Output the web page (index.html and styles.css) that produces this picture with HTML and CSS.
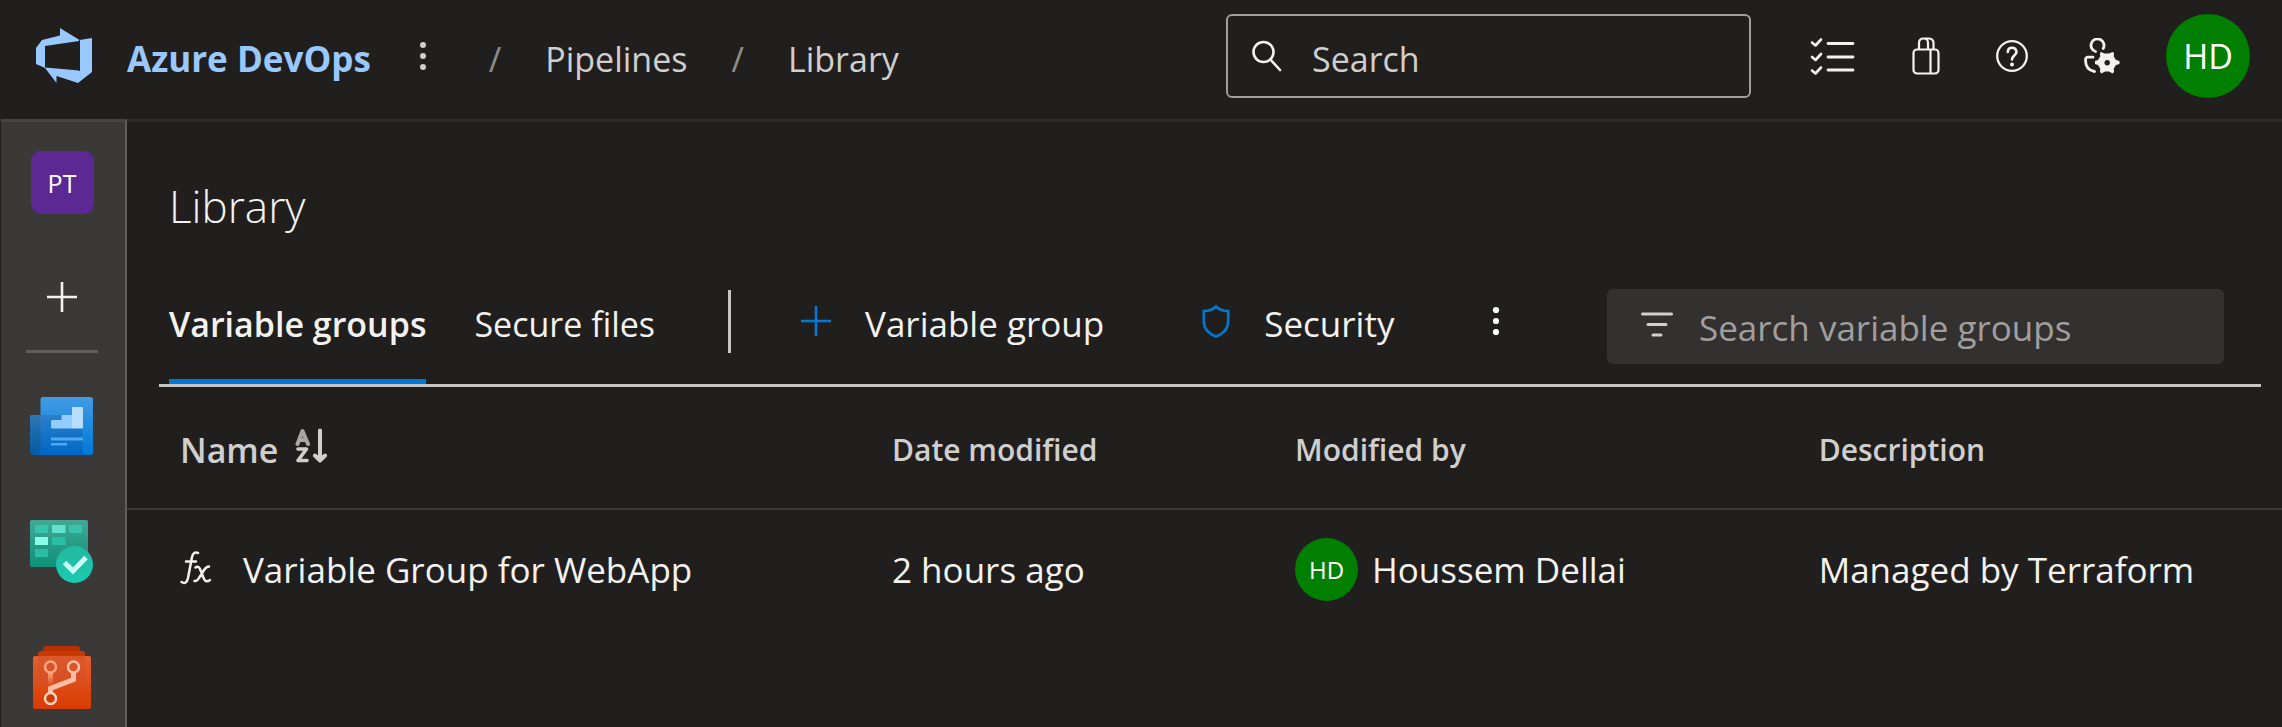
FILE: index.html
```html
<!DOCTYPE html>
<html lang="en">
<head>
<meta charset="utf-8">
<meta name="viewport" content="width=device-width, initial-scale=1">
<title>Library - Azure DevOps</title>
<link rel="stylesheet" href="styles.css">
</head>
<body>
<div class="app">
  <header class="topbar">
    <a class="brand" href="#">
      <svg class="brand-logo" width="56" height="56" viewBox="0 0 56 56" aria-hidden="true">
        <path fill="#99c8ff" fill-rule="evenodd" d="M24 0L43.500 12L56 10V44L42 55L20.500 48V55L9 40L0 36V20L6 12L24 7.500ZM9 18V39.500L43 42.500V13Z"/>
        <path stroke="#211f1e" stroke-width="1" d="M43.500 12V43"/>
      </svg>
      <span class="brand-name">Azure DevOps</span>
    </a>
    <button class="icon-button brand-more" type="button" aria-label="More">
      <svg width="8" height="30" viewBox="0 0 8 30" fill="#d0cfce"><circle cx="4" cy="4" r="3"/><circle cx="4" cy="15" r="3"/><circle cx="4" cy="26" r="3"/></svg>
    </button>
    <nav class="crumbs" aria-label="Breadcrumb">
      <span class="slash">/</span>
      <a href="#">Pipelines</a>
      <span class="slash">/</span>
      <a href="#">Library</a>
    </nav>
    <label class="global-search">
      <svg width="30" height="32" viewBox="0 0 30 32" fill="none" stroke="#f3f2f1" stroke-width="2.600" stroke-linecap="round" aria-hidden="true"><circle cx="11.500" cy="12" r="10"/><path d="M18.500 19.500L28 30"/></svg>
      <input type="search" placeholder="Search" aria-label="Search">
    </label>
    <div class="top-actions">
      <button class="icon-button" type="button" aria-label="Work items">
        <svg width="46" height="40" viewBox="0 0 46 40" fill="none" stroke="#f3f2f1" stroke-width="2.800" stroke-linecap="round" stroke-linejoin="round"><path d="M18 7.500H43M18 21H43M18 34H43"/><path stroke-width="2.600" d="M2 6.500L5.500 9.500L11 3.500M2 21L5.500 24L11 18M2 34.500L5.500 37.500L11 31.500"/></svg>
      </button>
      <button class="icon-button" type="button" aria-label="Marketplace">
        <svg width="28" height="38" viewBox="0 0 28 38" fill="none" stroke="#f3f2f1" stroke-width="2.200"><rect x="1.500" y="12.500" width="25" height="24" rx="3.500"/><path d="M18.500 12.500V36.500"/><path d="M7 12.500V6Q7 1.500 11.500 1.500T16 6V12.500M12.500 1.500H17Q21.500 2 21.500 6V12.500"/></svg>
      </button>
      <button class="icon-button" type="button" aria-label="Help">
        <svg width="32" height="32" viewBox="0 0 32 32" fill="none" stroke="#f3f2f1" stroke-width="2.300" stroke-linecap="round"><circle cx="16" cy="16" r="14.800"/><path stroke-width="2.600" d="M11.800 12Q12 7.800 16 7.800T20.500 12C20.500 15 16 15.600 16 19.500"/><circle cx="16" cy="24.500" r="2" fill="#f3f2f1" stroke="none"/></svg>
      </button>
      <button class="icon-button" type="button" aria-label="User settings">
        <svg width="36" height="36" viewBox="0 0 36 36" fill="none" stroke="#f3f2f1" stroke-width="2.800" stroke-linecap="round"><path d="M11.500 13.500A6.500 6.500 0 1 1 19.200 10.500"/><path d="M9 19.200H4Q1.500 19.200 1.500 22C1.500 28.500 5 32.500 10.500 33.500"/><path fill="#f3f2f1" stroke="none" fill-rule="evenodd" d="M17 14L20.500 15.500H25L28.500 14L30 15L29.800 18.500L32 22L35.500 23V26L32 27L29.800 30.500L30 34L28.500 35.500L25 33.500H21L17.500 35.500L16 34L16.200 30.500L14 27L11 26V23L14 22L16.200 18.500L16 15ZM23.200 22A2.700 2.700 0 1 0 23.200 27.400A2.700 2.700 0 1 0 23.200 22Z"/></svg>
      </button>
      <button class="avatar avatar-large" type="button">HD</button>
    </div>
  </header>

  <div class="body">
    <nav class="rail" aria-label="Project">
      <a class="project-tile" href="#">PT</a>
      <button class="icon-button rail-add" type="button" aria-label="Add">
        <svg width="30" height="30" viewBox="0 0 30 30" stroke="#f3f2f1" stroke-width="2.600"><path d="M0 15H30M15 0V30"/></svg>
      </button>
      <hr class="rail-rule">
      <a class="rail-link" href="#" aria-label="Overview">
        <svg width="64" height="64" viewBox="0 0 64 64">
          <defs>
            <linearGradient id="ov1" x1="0" y1="0" x2="0" y2="1"><stop offset="0" stop-color="#429be5"/><stop offset="1" stop-color="#0078d8"/></linearGradient>
            <linearGradient id="ov2" x1="0" y1="0" x2="0" y2="1"><stop offset="0" stop-color="#2a7fc9"/><stop offset="1" stop-color="#0067c6"/></linearGradient>
            <linearGradient id="ov3" x1="0" y1="0" x2="0" y2="1"><stop offset="0" stop-color="#3076b3"/><stop offset="1" stop-color="#005ba1"/></linearGradient>
          </defs>
          <rect x="10.500" y="3" width="52.500" height="58" rx="2.500" fill="url(#ov1)"/>
          <path fill="url(#ov2)" d="M2 21H52.500V54Q52.500 61 58 61H5Q0 61 0 56V23Q0 21 2 21Z"/>
          <path fill="url(#ov3)" d="M2 21H10.500V55Q10 60 5 61Q0 60 0 55V23Q0 21 2 21Z"/>
          <path fill="#92ccff" d="M22 26H31.500V21H42V34.500H22Q21 34.500 21 33V27Z"/>
          <rect x="42" y="13" width="11" height="21.500" rx="1" fill="#b7deff"/>
          <path fill="#50a8f0" d="M21 43.500H53V46.500H21ZM21 49H37V51.500H21Z"/>
        </svg>
      </a>
      <a class="rail-link" href="#" aria-label="Boards">
        <svg width="64" height="64" viewBox="0 0 64 64">
          <defs>
            <linearGradient id="bd1" x1="0" y1="0" x2="0" y2="1"><stop offset="0" stop-color="#42a896"/><stop offset="1" stop-color="#0f907a"/></linearGradient>
            <linearGradient id="bd2" x1="0" y1="0" x2="0" y2="1"><stop offset="0" stop-color="#23b8a0"/><stop offset="1" stop-color="#19cbb0"/></linearGradient>
          </defs>
          <rect x="0" y="0" width="58" height="47" rx="2" fill="url(#bd1)"/>
          <path fill="#37c4ac" d="M5 5H18V13H5ZM39 5H52V13H39Z"/>
          <path fill="#61e2cd" d="M22 5H35.500V13H22Z"/>
          <path fill="#8affe9" d="M5 17H18V25H5Z"/>
          <path fill="#29bfa5" d="M22 17H35.500V25H22ZM5 29H18V37H5Z"/>
          <circle cx="44.500" cy="44.500" r="18.500" fill="url(#bd2)"/>
          <path fill="none" stroke="#cbfff5" stroke-width="5" d="M34.500 42.500L43 51L56 37.500"/>
        </svg>
      </a>
      <a class="rail-link" href="#" aria-label="Repos">
        <svg width="64" height="64" viewBox="0 0 64 64">
          <defs>
            <linearGradient id="rp1" x1="0" y1="0" x2="0" y2="1"><stop offset="0" stop-color="#e55f2e"/><stop offset="1" stop-color="#d83b01"/></linearGradient>
            <linearGradient id="rp2" x1="0" y1="0" x2="0" y2="1"><stop offset="0" stop-color="#ff9d76"/><stop offset="1" stop-color="#d84a16"/></linearGradient>
          </defs>
          <rect x="13" y="0" width="37" height="20" rx="3" fill="#b83000"/>
          <rect x="8" y="5" width="47" height="20" rx="2.500" fill="#cb3700"/>
          <rect x="3" y="10" width="58" height="53" rx="2" fill="url(#rp1)"/>
          <path fill="#d0502c" fill-opacity=".5" d="M8 10H55V40H8Z"/>
          <path fill="url(#rp2)" d="M18 27H23V40H18Z"/>
          <path fill="none" stroke="#ffbfa5" stroke-width="5" d="M43.500 27V33.500L20.500 42.500V47"/>
          <circle cx="20.500" cy="21" r="5.500" fill="none" stroke="#ffa382" stroke-width="2.500"/>
          <circle cx="43.500" cy="21" r="5.500" fill="none" stroke="#ffbfa5" stroke-width="2.500"/>
          <circle cx="20.500" cy="52.500" r="5.500" fill="#d03800" stroke="#ffd3c1" stroke-width="2.500"/>
        </svg>
      </a>
    </nav>

    <main class="content">
      <h1 class="page-title">Library</h1>
      <div class="toolbar">
        <button class="tab tab-active" type="button">Variable groups</button>
        <button class="tab" type="button">Secure files</button>
        <span class="toolbar-divider"></span>
        <button class="command command-add" type="button">
          <svg width="30" height="30" viewBox="0 0 30 30" stroke="#0078d4" stroke-width="2.600" aria-hidden="true"><path d="M0 15H30M15 0V30"/></svg>
          <span>Variable group</span>
        </button>
        <button class="command command-security" type="button">
          <svg width="28" height="34" viewBox="0 0 28 34" fill="none" stroke="#0078d4" stroke-width="2.600" aria-hidden="true"><path d="M14 2.500Q9 7.300 1.800 7V17C1.800 25 6 29.500 14 32.500C22 29.500 26.200 25 26.200 17V7Q19 7.300 14 2.500Z"/></svg>
          <span>Security</span>
        </button>
        <button class="icon-button toolbar-more" type="button" aria-label="More commands">
          <svg width="8" height="30" viewBox="0 0 8 30" fill="#fff"><circle cx="4" cy="4" r="3.100"/><circle cx="4" cy="15" r="3.100"/><circle cx="4" cy="26" r="3.100"/></svg>
        </button>
        <label class="filter">
          <svg width="32" height="28" viewBox="0 0 32 28" stroke="#d0cfce" stroke-width="3" stroke-linecap="round" aria-hidden="true"><path d="M1.500 3H30.500M7 13.500H25M12 24H20"/></svg>
          <input type="search" placeholder="Search variable groups" aria-label="Search variable groups">
        </label>
      </div>

      <table class="groups">
        <colgroup><col class="col-name"><col class="col-date"><col class="col-user"><col class="col-desc"></colgroup>
        <thead>
          <tr>
            <th scope="col" class="th-name"><span class="sorted">Name
              <svg width="32" height="36" viewBox="0 0 32 36" fill="none" stroke="#d0cfce" stroke-linecap="round" stroke-linejoin="round" aria-hidden="true"><path stroke="#a8a7a6" stroke-width="4" d="M2.500 16L7.500 3L13 16M4.500 12H11"/><path stroke-width="3.600" d="M3 21H11.500L3 32.500H12"/><path stroke-width="4" d="M25 2.500V32M20 27.500L25 32.500L30 27.500"/></svg></span>
            </th>
            <th scope="col">Date modified</th>
            <th scope="col">Modified by</th>
            <th scope="col">Description</th>
          </tr>
        </thead>
        <tbody>
          <tr>
            <td><a class="group-link" href="#">
              <svg width="32" height="36" viewBox="0 0 32 36" fill="none" stroke="#f3f2f1" stroke-width="2.500" stroke-linecap="round" aria-hidden="true"><path d="M1.500 32Q6.500 35 8 28L12 7Q13.500 1 18 3M6 11.500H16"/><path d="M15.500 17.500Q18.500 15.500 20 19L24 29Q26 33 30 30M29 16.500Q26.500 16.500 24 20L19 28Q17 31.500 14.500 31"/></svg>
              <span>Variable Group for WebApp</span></a></td>
            <td>2 hours ago</td>
            <td><span class="person"><span class="avatar avatar-small">HD</span><span>Houssem Dellai</span></span></td>
            <td>Managed by Terraform</td>
          </tr>
        </tbody>
      </table>
    </main>
  </div>
</div>
</body>
</html>
```
FILE: styles.css
```css
* {
  box-sizing: border-box;
}

body {
  margin: 0;
  background: #211f1e;
  color: #f3f2f1;
  font: 400 34px/48px "Open Sans", "Noto Sans", sans-serif;
}

a {
  color: inherit;
  text-decoration: none;
}

button,
input {
  font: inherit;
  color: inherit;
  background: none;
  border: 0;
  padding: 0;
  margin: 0;
}

svg {
  display: block;
  flex: none;
}

.app {
  min-height: 100vh;
  display: flex;
  flex-direction: column;
}

.icon-button {
  display: flex;
  flex: none;
}

/* Top bar */
.topbar {
  display: flex;
  align-items: center;
  padding: 14px 32px 21px 36px;
  border-bottom: 3px solid #2f2d2c;
  white-space: nowrap;
}

.brand {
  display: flex;
  align-items: center;
  gap: 35px;
  color: #99c8ff;
  font-size: 35px;
  font-weight: 700;
}

.brand-name,
.crumbs {
  padding-top: 6px;
}

.brand-more {
  margin-left: 48px;
}

.crumbs {
  display: flex;
  gap: 44px;
  margin-left: 62px;
  color: #d0cfce;
}

.slash {
  color: #8f8d8b;
}

.global-search {
  display: flex;
  align-items: center;
  gap: 30px;
  flex: 0 1 525px;
  min-width: 0;
  height: 84px;
  margin-left: auto;
  padding: 0 24px;
  border: 2px solid #a19f9d;
  border-radius: 6px;
}

.global-search input,
.filter input {
  flex: 1;
  min-width: 0;
  outline: 0;
}

.global-search input {
  padding-top: 5px;
}

.global-search input::placeholder {
  color: #d0cfce;
  opacity: 1;
}

.top-actions {
  display: flex;
  align-items: center;
  gap: 56px;
  margin-left: 59px;
}

.avatar {
  display: flex;
  flex: none;
  align-items: center;
  justify-content: center;
  border-radius: 50%;
  background: #007f00;
  color: #fff;
}

.avatar-large {
  width: 84px;
  height: 84px;
  margin-left: -10px;
}

.avatar-small {
  width: 63px;
  height: 63px;
  font-size: 24px;
}

/* Side rail */
.body {
  flex: 1;
  display: flex;
}

.rail {
  display: flex;
  flex-direction: column;
  align-items: center;
  flex: none;
  width: 126px;
  margin: -3px 0 0 1px;
  padding: 29px 2px 0 0;
  background: #3b3937;
  border-top: 3px solid #464442;
  border-right: 2px solid #605e5c;
}

.project-tile {
  display: flex;
  align-items: center;
  justify-content: center;
  width: 63px;
  height: 63px;
  border-radius: 10px;
  background: #5c2893;
  color: #fff;
  font-size: 25px;
}

.rail-add {
  margin-top: 68px;
}

.rail-rule {
  width: 72px;
  height: 3px;
  margin: 38px 0 41px;
  border: 0;
  background: #605e5c;
}

.rail-link + .rail-link {
  margin-top: 62px;
}

/* Content */
.content {
  flex: 1;
  min-width: 0;
}

.page-title {
  margin: 0;
  padding: 52px 0 26px 42px;
  font-size: 44px;
  line-height: 64px;
  font-weight: 300;
}

.toolbar {
  display: flex;
  align-items: center;
  height: 123px;
  margin: 0 21px 0 32px;
  padding-left: 10px;
  border-bottom: 3px solid #c8c6c4;
  white-space: nowrap;
}

.tab {
  align-self: stretch;
  margin-right: 48px;
  padding-top: 4px;
  border-bottom: 5px solid transparent;
}

.tab-active {
  font-weight: 600;
  border-bottom-color: #0078d4;
}

.toolbar-divider {
  width: 3px;
  height: 63px;
  margin: 0 70px 5px 25px;
  background: #c8c6c4;
}

.command {
  display: flex;
  align-items: center;
  gap: 34px;
  margin-right: 98px;
  font-size: 35px;
}

.command svg,
.toolbar-more {
  margin-bottom: 6px;
}

.filter {
  display: flex;
  align-items: center;
  gap: 26px;
  flex: 0 1 617px;
  min-width: 0;
  height: 75px;
  margin: 5px 37px 0 auto;
  padding: 0 34px;
  border-radius: 6px;
  background: #323130;
  font-size: 35px;
}

.filter svg {
  margin-bottom: 4px;
}

.filter input {
  padding-top: 3px;
}

.filter input::placeholder {
  color: #a19f9d;
  opacity: 1;
}

/* Variable groups table */
.groups {
  width: 100%;
  table-layout: fixed;
  border-collapse: collapse;
  text-align: left;
  white-space: nowrap;
}

.col-name {
  width: 35.500%;
}

.col-date {
  width: 18.700%;
}

.col-user {
  width: 24.300%;
}

.groups th,
.groups td {
  padding: 0;
}

.groups th:first-child,
.groups td:first-child {
  padding-left: 53px;
}

.groups th {
  height: 122px;
  padding-top: 4px;
  border-bottom: 2px solid #3b3a39;
  color: #d0cfce;
  font-size: 30px;
  font-weight: 600;
}

.groups .th-name {
  font-size: 34px;
}

.groups td {
  height: 120px;
  font-size: 35px;
}

.sorted {
  display: flex;
  align-items: center;
  gap: 17px;
}

.sorted svg {
  margin-bottom: 8px;
}

.group-link {
  display: flex;
  align-items: center;
  gap: 31px;
}

.group-link svg {
  margin-bottom: 4px;
}

.person {
  display: flex;
  align-items: center;
  gap: 14px;
}
```
